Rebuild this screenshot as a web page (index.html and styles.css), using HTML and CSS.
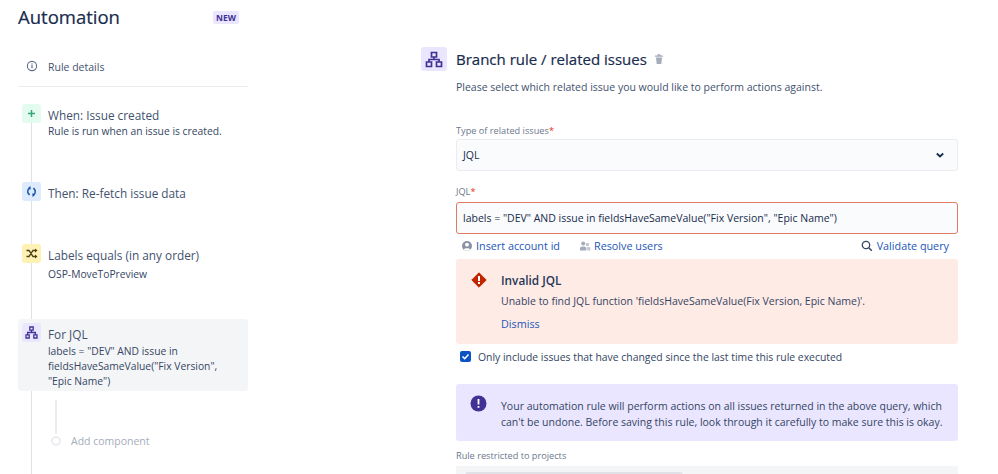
FILE: index.html
```html
<!DOCTYPE html>
<html lang="en">
<head>
<meta charset="utf-8">
<title>Automation</title>
<link rel="stylesheet" href="styles.css">
</head>
<body>
<div class="page">
  <aside class="side">
    <div class="brand"><h1>Automation</h1><span class="lozenge">NEW</span></div>
    <div class="details">
      <svg class="info-ic" viewBox="0 0 12 12" width="12" height="12"><circle cx="6" cy="6" r="4.6" fill="none" stroke="#5e6c84" stroke-width="1.1"/><rect x="5.4" y="5.2" width="1.2" height="3" fill="#5e6c84"/><rect x="5.4" y="3.4" width="1.2" height="1.2" fill="#5e6c84"/></svg>
      <span>Rule details</span>
    </div>
    <div class="flow">
      <span class="rail"></span>
      <div class="step step-when">
        <span class="ic ic-green"><svg viewBox="0 0 19 19" width="19" height="19"><path d="M9.5 6v7M6 9.500h7" stroke="#36a77c" stroke-width="1.500" fill="none"/></svg></span>
        <div class="txt"><div class="t1">When: Issue created</div><div class="t2">Rule is run when an issue is created.</div></div>
      </div>
      <div class="step step-then">
        <span class="ic ic-blue"><svg viewBox="0 0 19 19" width="19" height="19"><path d="M8 6 6 7.500 5.800 10.500 7.500 13M11 13 13 11.500 13.200 8.500 11.500 6" stroke="#0b4fa8" stroke-width="1.400" fill="none"/><path d="M8.500 4v4L6 6zM10.500 15v-4l2.500 2z" fill="#0b4fa8"/></svg></span>
        <div class="txt"><div class="t1">Then: Re-fetch issue data</div></div>
      </div>
      <div class="step step-cond">
        <span class="ic ic-yellow"><svg viewBox="0 0 19 19" width="19" height="19"><path d="M4.500 6.500h2.500l4 6h2M4.500 12.500h2.500l4-6h2" stroke="#4a3d10" stroke-width="1.300" fill="none"/><path d="M13 4.500l2.500 2-2.500 2zM13 10.500l2.500 2-2.500 2z" fill="#4a3d10"/></svg></span>
        <div class="txt"><div class="t1">Labels equals (in any order)</div><div class="t2">OSP-MoveToPreview</div></div>
      </div>
      <div class="step step-branch">
        <span class="ic ic-purple"><svg viewBox="0 0 19 19" width="19" height="19"><path d="M7.800 4h3.400v3.200H7.800zM4 11.800h3.200V15H4zM11.800 11.800H15V15h-3.200zM9.500 7.200v2.300M5.600 11.800V9.500h7.800v2.300" fill="none" stroke="#403294" stroke-width="1.300"/></svg></span>
        <div class="txt"><div class="t1">For JQL</div><div class="t2">labels = "DEV" AND issue in fieldsHaveSameValue("Fix Version", "Epic Name")</div></div>
      </div>
      <div class="add">
        <span class="add-line"></span>
        <div class="add-row"><span class="add-dot"></span><span class="add-txt">Add component</span></div>
      </div>
    </div>
  </aside>
  <main class="main">
    <div class="head">
      <span class="head-ic"><svg viewBox="0 0 26 24" width="26" height="24"><path d="M10.500 5.500h5v4.500h-5zM5.500 15h5v4.500h-5zM15.500 15h5v4.500h-5zM13 10v2.500M8 15v-2.500h10V15" fill="none" stroke="#403294" stroke-width="1.700"/></svg></span>
      <h2>Branch rule / related issues</h2>
      <svg class="trash" viewBox="0 0 10 12" width="10" height="12"><path d="M1 2.500h8v1.200H1zM3.500 1.200h3v1.300h-3zM2 4.500h6L7.300 11H2.700z" fill="#a5adba"/></svg>
    </div>
    <p class="desc">Please select which related issue you would like to perform actions against.</p>
    <label class="lbl lbl-type">Type of related issues<span class="req">*</span></label>
    <div class="select"><span>JQL</span><svg viewBox="0 0 10 10" width="10" height="10"><path d="M1.800 3.500 5 6.500l3.200-3" fill="none" stroke="#172b4d" stroke-width="1.800"/></svg></div>
    <label class="lbl lbl-jql">JQL<span class="req">*</span></label>
    <div class="input">labels = "DEV" AND issue in fieldsHaveSameValue("Fix Version", "Epic Name")</div>
    <div class="links">
      <a class="link l-acc"><svg viewBox="0 0 12 12" width="12" height="12"><circle cx="6" cy="6" r="5" fill="#8993a4"/><circle cx="6" cy="4.700" r="1.900" fill="#fff"/><path d="M2.700 9.500C3.500 7.700 8.500 7.700 9.300 9.500 7.500 11.200 4.500 11.200 2.700 9.500z" fill="#fff"/></svg>Insert account id</a>
      <a class="link l-res"><svg viewBox="0 0 12 12" width="12" height="12"><circle cx="4.200" cy="3.500" r="2" fill="#a5adba"/><circle cx="8.500" cy="4.500" r="1.700" fill="#c1c7d0"/><path d="M1 10.500V8c0-2 6.400-2 6.400 0v2.500z" fill="#a5adba"/><path d="M8.200 10.500V7.200c1.500-.3 3.200.2 3.200 1.300v2z" fill="#c1c7d0"/></svg>Resolve users</a>
      <a class="link l-val"><svg viewBox="0 0 12 12" width="12" height="12"><circle cx="5" cy="5" r="3.700" fill="none" stroke="#344563" stroke-width="1.300"/><path d="M7.800 7.800l3 3" stroke="#344563" stroke-width="1.500"/></svg>Validate query</a>
    </div>
    <div class="msg msg-err">
      <svg class="msg-ic" viewBox="0 0 16 16" width="16" height="16"><path d="M8 .800 15.200 8 8 15.200.8 8z" fill="#bf2600" stroke="#bf2600" stroke-linejoin="round"/><rect x="7" y="4" width="2" height="5" fill="#fff"/><rect x="7" y="10" width="2" height="2" fill="#fff"/></svg>
      <div>
        <div class="msg-title">Invalid JQL</div>
        <div class="msg-body">Unable to find JQL function 'fieldsHaveSameValue(Fix Version, Epic Name)'.</div>
        <a class="msg-link">Dismiss</a>
      </div>
    </div>
    <div class="check">
      <span class="box"><svg viewBox="0 0 11 11" width="11" height="11"><path d="M2.500 5.500 4.700 7.700 8.500 3.500" fill="none" stroke="#fff" stroke-width="1.600"/></svg></span>
      <span>Only include issues that have changed since the last time this rule executed</span>
    </div>
    <div class="msg msg-info">
      <svg class="msg-ic" viewBox="0 0 17 17" width="17" height="17"><circle cx="8.500" cy="8.500" r="8" fill="#403294"/><rect x="7.600" y="4" width="1.800" height="5.500" fill="#fff"/><rect x="7.600" y="11" width="1.800" height="1.800" fill="#fff"/></svg>
      <div class="msg-body">Your automation rule will perform actions on all issues returned in the above query, which can't be undone. Before saving this rule, look through it carefully to make sure this is okay.</div>
    </div>
    <label class="lbl lbl-rule">Rule restricted to projects</label>
    <div class="restrict"><span class="restrict-in"></span></div>
  </main>
</div>
</body>
</html>
```
FILE: styles.css
```css
* { box-sizing: border-box; }
html, body { margin: 0; height: 474px; overflow: hidden; background: #fff; }
body { font-family: "Open Sans", "Noto Sans", sans-serif; font-size: 10.5px; color: #344563; }
.page { display: flex; height: 474px; overflow: hidden; padding-left: 18px; }
.side { width: 230px; flex: none; }
.brand { display: flex; align-items: center; justify-content: space-between; height: 24px; margin-top: 4px; padding-right: 9px; }
h1 { margin: 0; font-size: 18.500px; font-weight: 400; color: #172b4d; -webkit-text-stroke: .2px #172b4d; }
.lozenge { background: #eae6ff; color: #403294; font-size: 8.500px; font-weight: 700; padding: 1px 3px; border-radius: 2px; line-height: 11px; margin-top: 2px; }
.details { display: flex; align-items: center; height: 20px; margin-top: 29px; padding-left: 8px; gap: 10px; font-size: 10.500px; color: #42526e; }
.info-ic { flex: none; margin-top: -2px; }
.flow { position: relative; border-top: 1px solid #ebecf0; margin-top: 9px; padding-top: 17px; height: 390px; }
.rail { position: absolute; left: 13px; top: 30px; bottom: 0; width: 1px; background: #dfe1e6; }
.step { position: relative; display: flex; gap: 7px; padding-left: 4px; }
.ic { flex: none; width: 19px; height: 19px; border-radius: 3px; display: block; }
.ic svg { display: block; }
.ic-green { background: #e3fcef; }
.ic-blue { background: #deebff; }
.ic-yellow { background: #fff0b3; }
.ic-purple { background: #eae6ff; }
.txt { padding-top: 3px; min-width: 0; }
.t1 { font-size: 11.800px; line-height: 16px; color: #42526e; }
.t2 { font-size: 10.300px; line-height: 15px; color: #344563; }
.step-when { height: 78px; }
.step-when .t2 { margin-top: 1px; }
.step-then { height: 62px; }
.step-cond { height: 71px; }
.step-cond .t2 { margin-top: 4px; }
.step-branch { background: #f4f5f7; border-radius: 3px; padding-top: 4px; height: 72px; margin-top: 4px; }
.step-branch .t2 { margin-top: 2px; width: 185px; }
.add { position: relative; padding-left: 33px; }
.add-line { display: block; width: 2px; height: 34px; margin: 9px 0 0 4px; background: #ebecf0; }
.add-row { display: flex; align-items: center; gap: 10px; color: #a5adba; font-size: 10.500px; }
.add-dot { width: 10px; height: 10px; border-radius: 50%; border: 2px solid #ebecf0; background: #fff; flex: none; }
.main { margin-left: 173px; width: 537px; flex: none; padding-left: 35px; position: relative; padding-top: 47px; }
.head { display: flex; align-items: center; height: 24px; }
.head-ic { position: absolute; left: 0; top: 47px; width: 26px; height: 24px; background: #eae6ff; border-radius: 3px; }
.head-ic svg { display: block; }
h2 { margin: 0; font-size: 15px; font-weight: 500; color: #172b4d; -webkit-text-stroke: .2px #172b4d; }
.trash { margin-left: 7px; }
.desc { margin: 7px 0 0; font-size: 10.500px; line-height: 18px; color: #42526e; }
.lbl { display: block; font-size: 9.200px; line-height: 12px; font-weight: 500; color: #6b778c; }
.req { color: #de350b; }
.lbl-type { margin-top: 29px; }
.select { display: flex; align-items: center; justify-content: space-between; height: 32px; margin-top: 2px; padding: 0 12px 0 6px; background: #fafbfc; border: 1px solid #ebecf0; border-radius: 3px; font-size: 10.500px; color: #172b4d; }
.lbl-jql { margin-top: 15px; }
.input { height: 32px; margin-top: 4px; padding: 0 6px; display: flex; align-items: center; background: #fafbfc; border: 1.500px solid #e07b64; border-radius: 3px; font-size: 10.500px; color: #172b4d; white-space: nowrap; }
.links { display: flex; align-items: center; height: 23px; margin-bottom: 2px; padding: 0 9px 0 5px; }
.link { display: flex; align-items: center; gap: 3px; color: #1c56b8; font-size: 10.800px; font-weight: 500; }
.l-res { margin-left: 19px; }
.l-val { margin-left: auto; gap: 4px; }
.msg { display: flex; border-radius: 3px; }
.msg-err { background: #ffebe6; height: 85px; padding: 13px 0 0 15px; gap: 14px; }
.msg-ic { flex: none; }
.msg-title { font-size: 11.800px; font-weight: 600; color: #253858; line-height: 16px; }
.msg-body { font-size: 10.500px; line-height: 16px; color: #344563; }
.msg-err .msg-body { margin-top: 5px; }
.msg-link { display: block; margin-top: 7px; color: #1c56b8; font-size: 10.800px; line-height: 16px; }
.check { display: flex; align-items: center; gap: 7px; height: 27px; padding: 0 0 2px 4px; font-size: 10.400px; color: #344563; }
.box { width: 11px; height: 11px; border-radius: 2px; background: #0b52c4; flex: none; display: block; }
.box svg { display: block; }
.msg-info { background: #eae6ff; height: 57px; margin-top: 13px; padding: 14px 10px 0 14px; gap: 14px; align-items: flex-start; }
.msg-info .msg-ic { margin-top: -3px; }
.lbl-rule { margin-top: 9px; }
.restrict { height: 60px; margin-top: 4px; background: #f4f5f7; padding: 6px 0 0 9px; }
.restrict-in { display: block; width: 218px; height: 40px; background: #dfe1e6; border-radius: 3px; }
```
